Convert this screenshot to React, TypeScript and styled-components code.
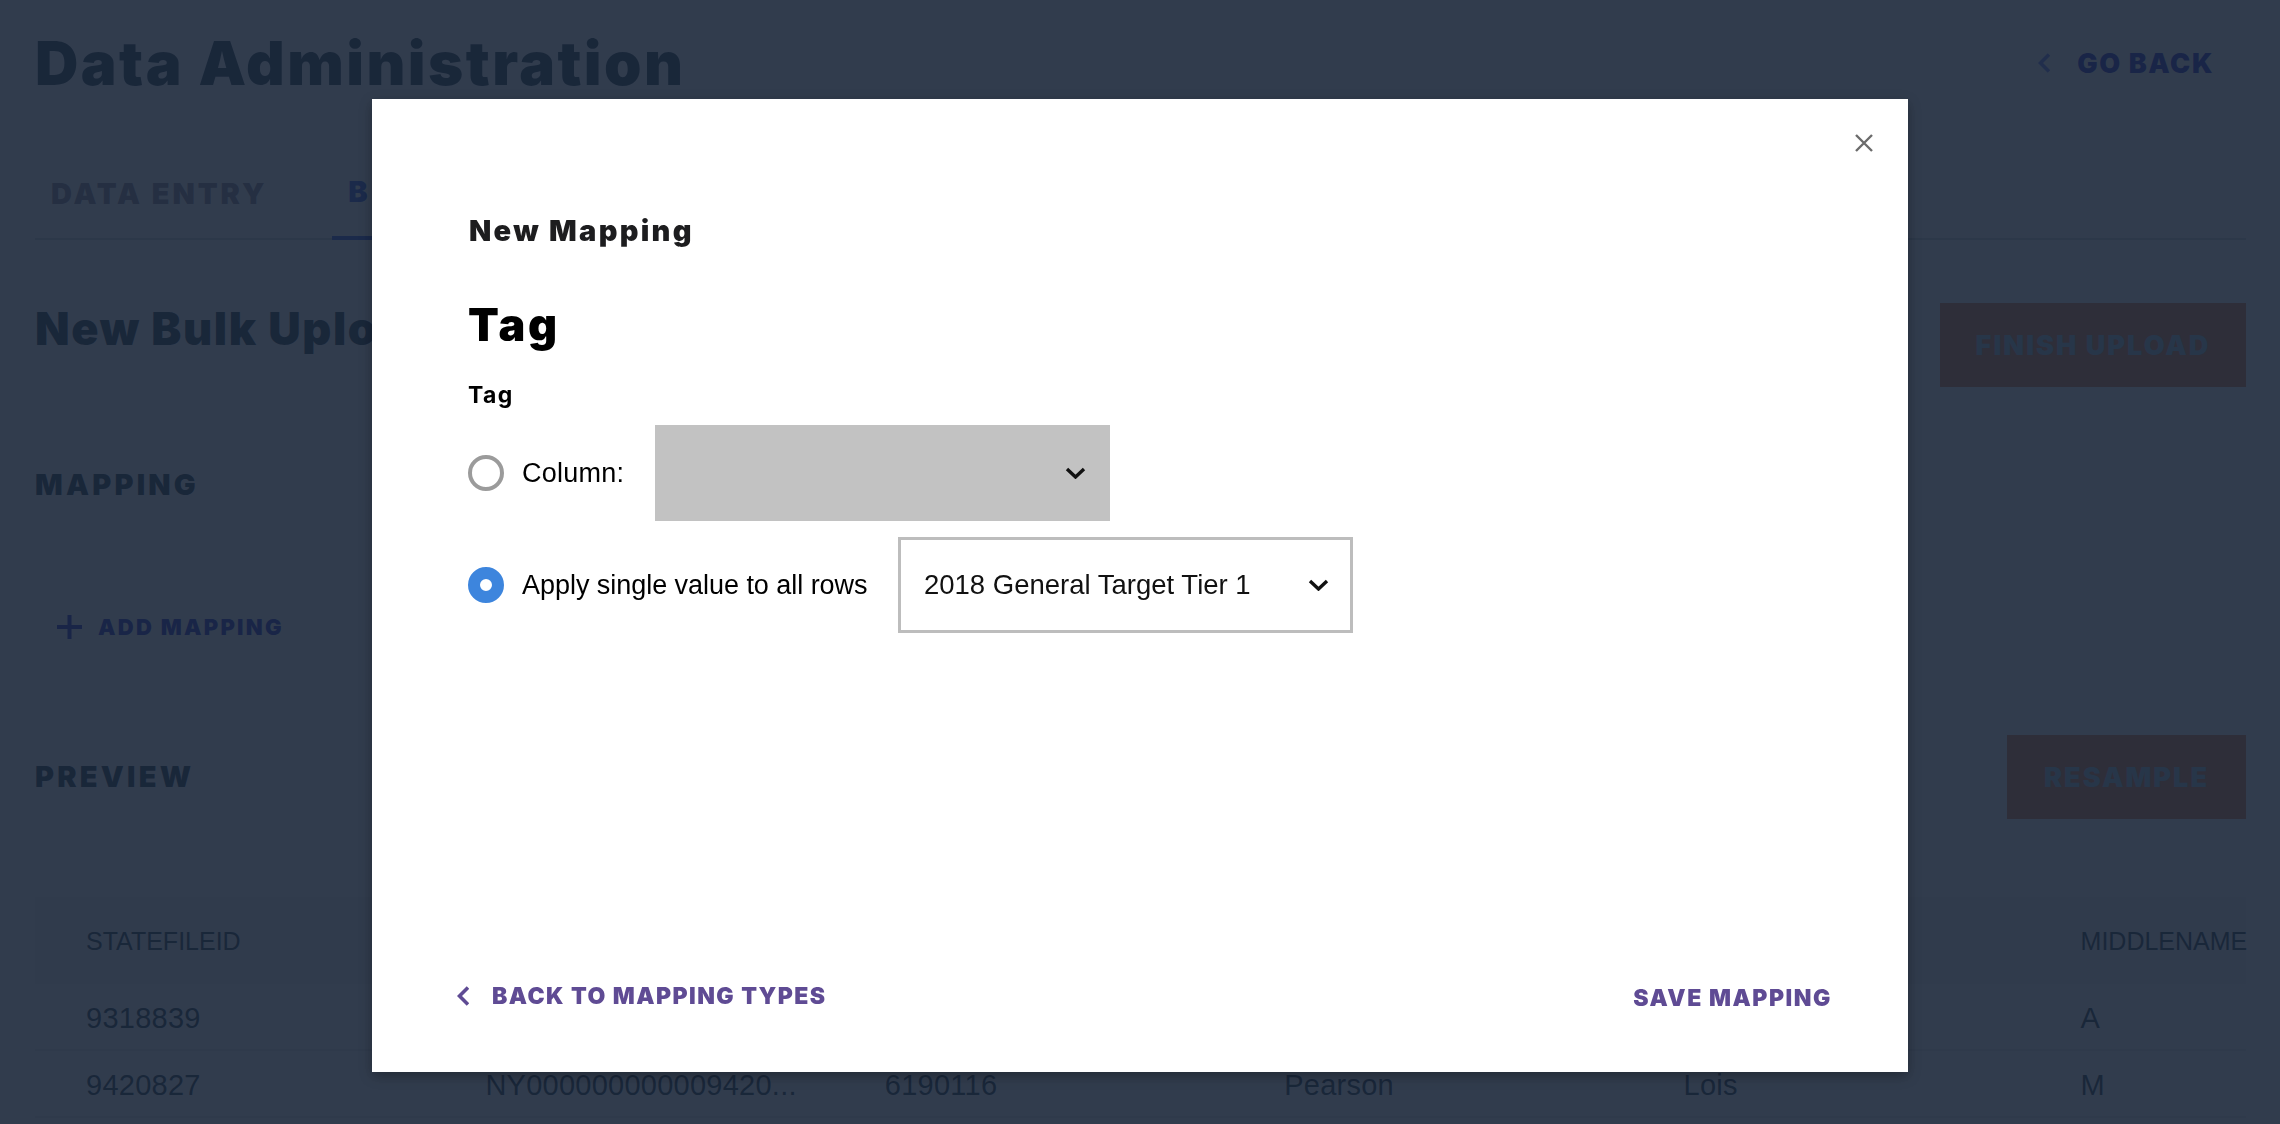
import React from "react";
import styled, { createGlobalStyle } from "styled-components";

const heavy = `"Inter", "Liberation Sans", Arial, sans-serif`;

const Global = createGlobalStyle`
  html, body { margin: 0; padding: 0; background: #fff; }
  body { font-family: "Liberation Sans", Arial, sans-serif; color: #11283a; overflow: hidden; }
  * { box-sizing: border-box; }
`;

const Page = styled.div`
  width: 2280px;
  height: 1124px;
  padding: 0 34px 0 35px;
  overflow: hidden;
  display: flex;
  flex-direction: column;
`;
const Header = styled.header`
  height: 126px;
  display: flex;
  align-items: center;
  justify-content: space-between;
`;
const Title = styled.h1`
  margin: 0;
  font-family: ${heavy};
  font-size: 60px;
  line-height: 72px;
  font-weight: 900;
  letter-spacing: 2.45px;
`;
const GoBack = styled.a`
  display: flex;
  align-items: center;
  gap: 27px;
  padding-right: 32px;
  font-family: ${heavy};
  font-size: 27px;
  font-weight: 900;
  letter-spacing: 1.6px;
  color: #0e14bc;
  svg { display: block; }
`;
const Tabs = styled.nav`
  height: 114px;
  display: flex;
  gap: 49px;
  border-bottom: 2px solid #c5cfd4;
`;
const Tab = styled.div<{ $active?: boolean }>`
  height: 114px;
  padding: 20px 16px 0;
  display: flex;
  align-items: center;
  font-family: ${heavy};
  font-size: 29px;
  font-weight: 900;
  letter-spacing: 2.95px;
  color: ${(p) => (p.$active ? "#1e46dc" : "#82788c")};
  border-bottom: ${(p) => (p.$active ? "4px solid #1e46dc" : "0")};
`;
const TitleRow = styled.section`
  margin-top: 63px;
  height: 84px;
  display: flex;
  justify-content: space-between;
`;
const SubTitle = styled.h2`
  margin: 0;
  font-family: ${heavy};
  font-size: 45px;
  line-height: 52px;
  font-weight: 900;
  letter-spacing: 1.6px;
`;
const SolidButton = styled.button<{ $w: number }>`
  width: ${(p) => p.$w}px;
  height: 84px;
  border: 0;
  padding: 0;
  background: #d96e3a;
  color: #9dbdd8;
  font: 900 27px ${heavy};
  letter-spacing: 2.05px;
`;
const SectionHead = styled.h3`
  margin: 0;
  font-family: ${heavy};
  font-size: 29px;
  line-height: 36px;
  font-weight: 900;
  letter-spacing: 3.2px;
`;
const MappingHead = styled(SectionHead)`
  margin-top: 80px;
`;
const AddMapping = styled.a`
  margin-top: 108px;
  margin-left: 22px;
  height: 32px;
  display: flex;
  align-items: center;
  gap: 16px;
  font-family: ${heavy};
  font-size: 22px;
  font-weight: 900;
  letter-spacing: 2.25px;
  color: #0e14bc;
`;
const PreviewRow = styled.section`
  margin-top: 92px;
  height: 84px;
  display: flex;
  align-items: center;
  justify-content: space-between;
`;
const Table = styled.div`
  margin-top: 78px;
  display: flex;
  flex-direction: column;
`;
const HeadRow = styled.div`
  height: 87px;
  display: grid;
  grid-template-columns: repeat(4, 399.4px) 397px 1fr;
  padding: 1px 0 0 51px;
  align-items: center;
  background: #f0f0f2;
  font-size: 25px;
`;
const BodyRow = styled.div`
  height: 67px;
  display: grid;
  grid-template-columns: repeat(4, 399.4px) 397px 1fr;
  padding: 4px 0 0 51px;
  align-items: center;
  border-bottom: 2px solid #e8e8ea;
  font-size: 29px;
  letter-spacing: 0.25px;
  color: #11283a;
`;
const Cell = styled.div`
  white-space: nowrap;
`;

const Overlay = styled.div`
  position: fixed;
  inset: 0;
  background: rgba(27, 39, 58, 0.9);
`;
const Modal = styled.div`
  position: fixed;
  left: 372px;
  top: 99px;
  width: 1536px;
  height: 973px;
  background: #fff;
  box-shadow: 0 4px 12px rgba(0, 0, 0, 0.3);
  display: flex;
  flex-direction: column;
  padding: 0 76px 60px 97px;
`;
const Close = styled.button`
  position: absolute;
  right: 35px;
  top: 35px;
  width: 18px;
  height: 18px;
  padding: 0;
  border: 0;
  background: none;
  svg { display: block; }
`;
const ModalEyebrow = styled.h2`
  margin: 114px 0 0;
  font-family: ${heavy};
  font-size: 29px;
  line-height: 36px;
  font-weight: 900;
  letter-spacing: 2.3px;
  color: #1d1d1f;
`;
const ModalTitle = styled.h1`
  margin: 50px 0 0 -1px;
  font-family: ${heavy};
  font-size: 45px;
  line-height: 52px;
  font-weight: 900;
  letter-spacing: 2.8px;
  color: #000;
`;
const FieldLabel = styled.div`
  margin: 30px 0 0 -1px;
  font-family: ${heavy};
  font-size: 23px;
  line-height: 28px;
  font-weight: 700;
  letter-spacing: 1.4px;
  color: #000;
`;
const Options = styled.div`
  margin-top: 16px;
  display: flex;
  flex-direction: column;
  gap: 16px;
`;
const OptionRow = styled.div`
  display: flex;
  align-items: center;
`;
const Radio = styled.span<{ $on?: boolean }>`
  width: 36px;
  height: 36px;
  margin-left: -1px;
  border-radius: 50%;
  background: #fff;
  border: ${(p) => (p.$on ? "12px solid #3d85dd" : "4px solid #9b9b9b")};
`;
const OptionLabel = styled.span<{ $ls?: number }>`
  margin-left: 18px;
  margin-right: 30.5px;
  font-size: 27px;
  letter-spacing: ${(p) => p.$ls ?? -0.04}px;
  color: #000;
  white-space: nowrap;
`;
const Select = styled.div<{ $disabled?: boolean }>`
  width: 455px;
  height: 96px;
  display: flex;
  align-items: center;
  justify-content: space-between;
  padding: 0 21px 0 23px;
  font-size: 27.5px;
  color: #111;
  background: ${(p) => (p.$disabled ? "#c2c2c2" : "#fff")};
  border: 3px solid ${(p) => (p.$disabled ? "#c2c2c2" : "#bdbdbd")};
  svg { display: block; }
`;
const Footer = styled.footer`
  margin-top: auto;
  display: flex;
  justify-content: space-between;
  margin-left: -12px;
`;
const BackLink = styled.a`
  display: flex;
  align-items: center;
  gap: 23px;
  font-family: ${heavy};
  font-size: 23px;
  line-height: 28px;
  font-weight: 900;
  letter-spacing: 1.45px;
  color: #5f4b94;
  svg { display: block; }
`;
const SaveLink = styled.a`
  margin-top: 4px;
  font-family: ${heavy};
  font-size: 23px;
  line-height: 28px;
  font-weight: 900;
  letter-spacing: 1.55px;
  color: #5f4b94;
`;

const Chevron = ({ color, weight = 3 }: { color: string; weight?: number }) => (
  <svg width="12" height="20" viewBox="0 0 12 20" fill="none">
    <polyline points="11,1.5 2.5,10 11,18.5" stroke={color} strokeWidth={weight} />
  </svg>
);
const Caret = () => (
  <svg width="21" height="12" viewBox="0 0 21 12" fill="none">
    <polyline points="2,2 10.5,10 19,2" stroke="#111" strokeWidth="3.4" />
  </svg>
);

const rows = [
  ["9318839", "", "", "", "", "A"],
  ["9420827", "NY000000000009420...", "6190116", "Pearson", "Lois", "M"],
];

export default function App() {
  return (
    <>
      <Global />
      <Page>
        <Header>
          <Title>Data Administration</Title>
          <GoBack>
            <Chevron color="#5a70f0" weight={3.6} />
            GO BACK
          </GoBack>
        </Header>
        <Tabs>
          <Tab>DATA ENTRY</Tab>
          <Tab $active>BULK UPLOAD</Tab>
        </Tabs>
        <TitleRow>
          <SubTitle>New Bulk Upload</SubTitle>
          <SolidButton $w={306}>FINISH UPLOAD</SolidButton>
        </TitleRow>
        <MappingHead>MAPPING</MappingHead>
        <AddMapping>
          <svg width="25" height="24" viewBox="0 0 25 24" fill="none">
            <path d="M12.5 0v24M0 12h25" stroke="#0e14bc" strokeWidth="4" />
          </svg>
          ADD MAPPING
        </AddMapping>
        <PreviewRow>
          <SectionHead>PREVIEW</SectionHead>
          <SolidButton $w={239}>RESAMPLE</SolidButton>
        </PreviewRow>
        <Table>
          <HeadRow>
            <Cell>STATEFILEID</Cell>
            <Cell />
            <Cell />
            <Cell />
            <Cell />
            <Cell>MIDDLENAME</Cell>
          </HeadRow>
          {rows.map((r) => (
            <BodyRow key={r[0]}>
              {r.map((c, i) => (
                <Cell key={i}>{c}</Cell>
              ))}
            </BodyRow>
          ))}
        </Table>
      </Page>
      <Overlay />
      <Modal>
        <Close aria-label="Close">
          <svg width="18" height="18" viewBox="0 0 18 18" fill="none">
            <path d="M1 1l16 16M17 1L1 17" stroke="#6b6b6b" strokeWidth="2.4" />
          </svg>
        </Close>
        <ModalEyebrow>New Mapping</ModalEyebrow>
        <ModalTitle>Tag</ModalTitle>
        <FieldLabel>Tag</FieldLabel>
        <Options>
          <OptionRow>
            <Radio />
            <OptionLabel $ls={0.25}>Column:</OptionLabel>
            <Select $disabled>
              <span />
              <Caret />
            </Select>
          </OptionRow>
          <OptionRow>
            <Radio $on />
            <OptionLabel>Apply single value to all rows</OptionLabel>
            <Select>
              <span>2018 General Target Tier 1</span>
              <Caret />
            </Select>
          </OptionRow>
        </Options>
        <Footer>
          <BackLink>
            <Chevron color="#5f4b94" weight={3.6} />
            BACK TO MAPPING TYPES
          </BackLink>
          <SaveLink>SAVE MAPPING</SaveLink>
        </Footer>
      </Modal>
    </>
  );
}
